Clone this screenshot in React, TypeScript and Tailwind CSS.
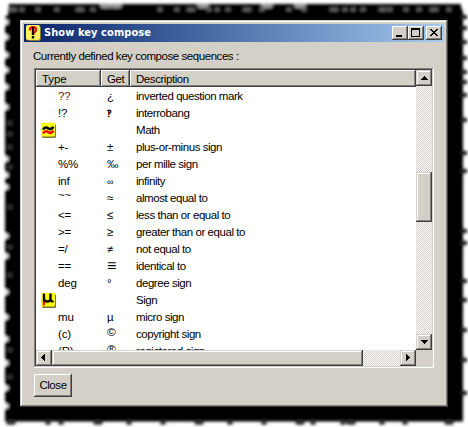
import React from "react";

type Row = { type?: string; get?: string; text: string; icon?: "approx" | "mu"; brown?: boolean };

const rows: Row[] = [
  { type: "??", get: "¿", text: "inverted question mark", brown: true },
  { type: "!?", get: "‽", text: "interrobang" },
  { text: "Math", icon: "approx" },
  { type: "+-", get: "±", text: "plus-or-minus sign" },
  { type: "%%", get: "‰", text: "per mille sign" },
  { type: "inf", get: "∞", text: "infinity" },
  { type: "~~", get: "≈", text: "almost equal to" },
  { type: "<=", get: "≤", text: "less than or equal to" },
  { type: ">=", get: "≥", text: "greater than or equal to" },
  { type: "=/", get: "≠", text: "not equal to" },
  { type: "==", get: "≡", text: "identical to" },
  { type: "deg", get: "°", text: "degree sign" },
  { text: "Sign", icon: "mu" },
  { type: "mu", get: "µ", text: "micro sign" },
  { type: "(c)", get: "©", text: "copyright sign" },
  { type: "(R)", get: "®", text: "registered sign" },
];

const glyphClass: Record<string, string> = {
  "≡": "text-[16px]",
  "∞": "text-[9px]",
  "≈": "text-[12px]",
  "≠": "text-[11px]",
  "‽": "text-[10px] font-bold",
  "‰": "text-[11.5px]",
  "©": "text-[12px] -translate-y-px scale-y-[0.85]",
  "®": "text-[12px] -translate-y-px scale-y-[0.85]",
};

const raised =
  "bg-[#d4d0c8] shadow-[inset_-1px_-1px_#404040,inset_1px_1px_#d4d0c8,inset_-2px_-2px_#808080,inset_2px_2px_#fff]";
const control =
  "bg-[#d4d0c8] shadow-[inset_-1px_-1px_#404040,inset_1px_1px_#fff,inset_-2px_-2px_#808080]";
const dither =
  "bg-[conic-gradient(#fff_25%,#d4d0c8_0_50%,#fff_0_75%,#d4d0c8_0)] bg-[length:2px_2px]";

function RoughShadow() {
  const topMarks = [13, 22, 38, 57, 80, 93, 160, 177, 191, 209, 217, 228, 247, 262, 289, 304, 334, 345, 353, 363, 383, 390, 406, 419, 434, 449];
  const bottomMarks = [11, 48, 61, 98, 129, 163, 199, 230, 264, 300, 313, 343, 351, 382, 405, 449];
  const rightMarks = [17, 28, 42, 58, 72, 82, 95, 120, 153, 171, 231, 243, 281, 300, 330, 360, 393];
  const leftMarks = [22, 37, 55, 70, 87, 107, 159, 175, 187, 236, 256, 292, 317, 339, 363, 388, 406];
  return (
    <svg className="absolute inset-0" width="468" height="427" aria-hidden="true">
      <defs>
        <filter id="soft" x="-5%" y="-5%" width="110%" height="110%">
          <feGaussianBlur stdDeviation="1.8" />
        </filter>
      </defs>
      <g filter="url(#soft)">
        <path d="M9 4H461V7L463 12V421.5H5V17L8 15Z" fill="#000" />
        {topMarks.map((x, i) => (
          <ellipse key={x} cx={x} cy="9.5" rx={i % 4 === 0 ? 4.5 : 2.5} ry="2" fill="#606060" />
        ))}
        {[106, 116, 203, 267, 300].map((x) => (
          <ellipse key={x} cx={x} cy="6" rx="6" ry="2.5" fill="#999" />
        ))}
        {bottomMarks.map((x, i) => (
          <ellipse key={x} cx={x} cy="422.5" rx={i % 3 === 0 ? 5 : 3} ry="2.5" fill="#333" />
        ))}
        {rightMarks.map((y) => (
          <ellipse key={y} cx="464" cy={y} rx="3.5" ry="2.5" fill="#202020" />
        ))}
        {leftMarks.map((y) => (
          <ellipse key={y} cx="4.5" cy={y} rx="4" ry="2.5" fill="#fff" />
        ))}
        {[123, 134, 147, 167, 207, 247, 275, 350, 377].map((y) => (
          <ellipse key={y} cx="10" cy={y} rx="2.5" ry="2.5" fill="#303030" />
        ))}
      </g>
    </svg>
  );
}

function RowIcon({ kind }: { kind: "approx" | "mu" }) {
  return (
    <svg width="16" height="16" className="block -translate-y-[0.5px]">
      <rect x="1" y="1.5" width="14" height="14" rx="1.5" fill="#77743a" />
      <rect width="14" height="14" rx="1.5" fill="#ffff10" />
      {kind === "approx" ? (
        <g fill="none" strokeWidth="2.5">
          <path d="M2 7.2C3.5 4.6 5.5 4.6 7 5.8S10.5 6.8 12.5 4.4" stroke="#000" />
          <path d="M2 11C3.5 8.4 5.5 8.4 7 9.6S10.5 10.6 12.5 8.2" stroke="#f00" />
        </g>
      ) : (
        <g fill="none">
          <path d="M3 1V9.5M3 6C3 10 9.5 10 9.5 6V1M9.5 6Q9.5 9.2 12.5 8.8" stroke="#000" strokeWidth="2.3" />
          <path d="M2.8 9V13" stroke="#f00" strokeWidth="2" />
        </g>
      )}
    </svg>
  );
}

function Arrow({ dir }: { dir: "up" | "down" | "left" | "right" }) {
  const paths = {
    up: "M8 6h1v1h1v1h1v1h1v1H5V9h1V8h1V7h1z",
    down: "M5 6h7v1h-1v1h-1v1H9v1H8V9H7V8H6V7H5z",
    left: "M9 4v7H8v-1H7V9H6V8H5V7h1V6h1V5h1V4z",
    right: "M6 4h1v1h1v1h1v1h1v1H9v1H8v1H7v1H6z",
  };
  return (
    <svg className="block" width="16" height="16" shapeRendering="crispEdges">
      <path d={paths[dir]} />
    </svg>
  );
}

function HeaderCell({ label, className }: { label: string; className: string }) {
  return (
    <div className={`h-[17px] bg-[#d4d0c8] pt-[3px] leading-[13px] shadow-[inset_-1px_-1px_#404040,inset_1px_1px_#fff,inset_-2px_-2px_#808080] ${className}`}>
      {label}
    </div>
  );
}

export default function App() {
  return (
    <main className="relative h-[427px] w-[468px] overflow-hidden bg-white pl-5 pt-5 font-['Liberation_Sans',Arial,sans-serif] text-[11.5px] tracking-[-0.44px] text-black">
      <RoughShadow />
      <section className={`relative h-[387px] w-[428px] p-1 ${raised}`}>
        <header className="flex h-[18px] items-center bg-linear-to-r from-[#0a246a] to-[#a6caf0] px-[2px]">
          <svg width="15" height="16">
            <rect x="1" y="1" width="14" height="15" rx="2" fill="#7d783b" />
            <rect width="14" height="15" rx="2" fill="#fff45a" />
            <path d="M4 5.5V4Q4.5 2 7 2.2Q10.3 2.2 10 5Q9.8 7.2 7 8" fill="none" stroke="#f00" strokeWidth="2.2" />
            <path d="M7 2V10M7 11V13.5" stroke="#000" strokeWidth="2.4" />
          </svg>
          <h1 className="ml-[3px] whitespace-nowrap font-['DejaVu_Sans_Condensed','DejaVu_Sans',sans-serif] text-[11px] font-bold leading-[18px] tracking-[0.07px] text-white">
            Show key compose
          </h1>
          <div className="ml-auto flex">
            <button className={`h-[14px] w-4 ${control}`} aria-label="Minimize">
              <svg className="block" width="16" height="14" shapeRendering="crispEdges"><path d="M4 9h6v2H4z" /></svg>
            </button>
            <button className={`h-[14px] w-4 ${control}`} aria-label="Maximize">
              <svg className="block" width="16" height="14" shapeRendering="crispEdges"><path fillRule="evenodd" d="M3 2h9v9H3zM4 4v6h7V4z" /></svg>
            </button>
            <button className={`ml-[2px] h-[14px] w-4 ${control}`} aria-label="Close window">
              <svg className="block" width="16" height="14" shapeRendering="crispEdges"><path d="M4 3h2v1h1v1h2V4h1V3h2v1h-1v1h-1v1H9v1h1v1h1v1h1v1h-2V9H9V8H7v1H6v1H4V9h1V8h1V7h1V6H6V5H5V4H4z" /></svg>
            </button>
          </div>
        </header>

        <div className="px-[10px]">
          <p className="-ml-px h-[26px] whitespace-nowrap pt-[7px] leading-[14px]">Currently defined key compose sequences :</p>

          <div className="h-[300px] w-[400px] bg-white p-[2px] shadow-[inset_-1px_-1px_#fff,inset_1px_1px_#808080,inset_-2px_-2px_#d4d0c8,inset_2px_2px_#404040]">
            <div className="flex h-[280px]">
              <div className="w-[380px] overflow-hidden">
                <div className="flex">
                  <HeaderCell label="Type" className="w-[65px] pl-[6px] tracking-[-0.1px]" />
                  <HeaderCell label="Get" className="w-[29px] pl-[6px]" />
                  <HeaderCell label="Description" className="w-[286px] pl-[6px]" />
                </div>
                <div className="pt-px">
                  {rows.map((row) => (
                    <div key={row.text} className="flex h-[17px] items-center whitespace-nowrap leading-[17px]">
                      <div className="flex w-[71px] items-center pl-[5px]">
                        {row.icon ? (
                          <RowIcon kind={row.icon} />
                        ) : (
                          <span className={`pl-[17px] tracking-[-0.2px] ${row.brown ? "text-[#702000]" : ""} ${row.type === "~~" ? "-translate-y-[3px]" : ""}`}>{row.type}</span>
                        )}
                      </div>
                      <div className="w-[29px]">
                        <span className={`inline-block ${row.get ? glyphClass[row.get] ?? "" : ""}`}>{row.get}</span>
                      </div>
                      <span>{row.text}</span>
                    </div>
                  ))}
                </div>
              </div>
              <div className={`flex w-4 flex-col ${dither}`}>
                <div className={`h-4 ${raised}`}><Arrow dir="up" /></div>
                <div className={`mt-[86px] h-[50px] ${raised}`} />
                <div className={`mt-auto h-4 ${raised}`}><Arrow dir="down" /></div>
              </div>
            </div>
            <div className="flex h-4 bg-[#d4d0c8]">
              <div className={`flex w-[380px] ${dither}`}>
                <div className={`w-4 ${raised}`}><Arrow dir="left" /></div>
                <div className={`w-[311px] ${raised}`} />
                <div className={`ml-auto w-4 ${raised}`}><Arrow dir="right" /></div>
              </div>
            </div>
          </div>
          <button className={`mt-[6px] block h-[23px] w-[38px] text-center leading-[21px] tracking-[-0.44px] ${control}`}>Close</button>
        </div>
      </section>
    </main>
  );
}
